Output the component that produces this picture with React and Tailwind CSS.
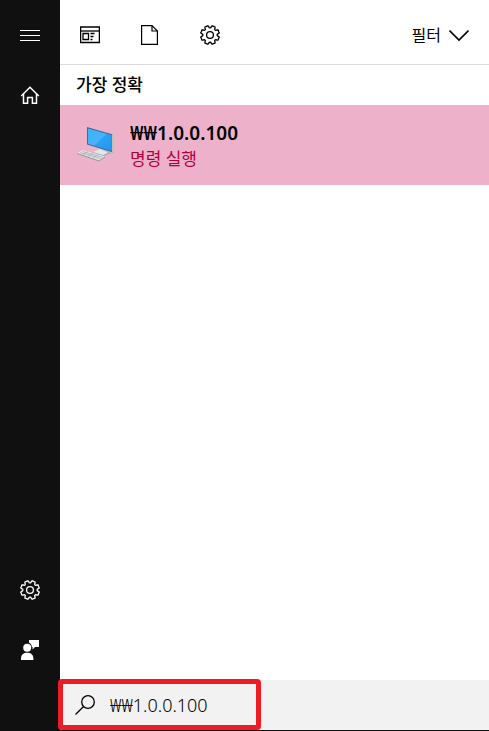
import React from 'react';

// One gear tooth: angle from the tooth's centre, distance from the hub
const TOOTH = [[-22.5, 7.1], [-16, 7.4], [-13.5, 8.6], [-9, 9.6], [-4, 9.3], [4, 9.3], [9, 9.6], [13.5, 8.6], [16, 7.4]];

function gearPath() {
    const points = [];
    for (let tooth = 0; tooth < 8; tooth++) {
        TOOTH.forEach(([offset, radius]) => {
            const angle = ((22.5 + tooth * 45 + offset) * Math.PI) / 180;
            points.push(`${(10 + radius * Math.sin(angle)).toFixed(2)} ${(10 - radius * Math.cos(angle)).toFixed(2)}`);
        });
    }
    return `M${points.join('L')}Z`;
}

const GEAR = gearPath();

function GearIcon() {
    return (
        <svg viewBox="0 0 20 20" className="w-5 h-5" fill="none" stroke="currentColor" strokeWidth="1.3" strokeLinejoin="round">
            <path d={GEAR} />
            <circle cx="10" cy="10" r="3.4" />
        </svg>
    );
}

function MenuIcon() {
    return (
        <svg viewBox="0 0 20 20" className="w-5 h-5" stroke="currentColor" strokeWidth="1">
            <path d="M0 5.5H20M0 10.5H20M0 15.5H20" />
        </svg>
    );
}

function HomeIcon() {
    return (
        <svg viewBox="0 0 20 20" className="w-5 h-5" fill="none" stroke="currentColor" strokeWidth="1.5">
            <path d="M1.2 11L10 2.2L18.8 11" />
            <path d="M3.5 9V18.3H7.6V12.5H12.4V18.3H16.5V9" />
        </svg>
    );
}

function FeedbackIcon() {
    return (
        <svg viewBox="0 0 20 20" className="w-5 h-5" fill="currentColor">
            <path d="M9 0H19V7H15L12.6 9.6V7H11.8C11.8 4.8 10.6 3.3 9 2.7Z" />
            <circle cx="7.2" cy="7.7" r="4" />
            <path d="M1 20V18.5C1 14.8 3.6 12.8 7.2 12.8S13.4 14.8 13.4 18.5V20Z" />
        </svg>
    );
}

function AppsIcon() {
    return (
        <svg viewBox="0 0 20 20" className="w-5 h-5" fill="none" stroke="currentColor">
            <path d="M0.6 2H19.4V17.5H0.6Z" strokeWidth="1.3" />
            <path d="M0 6H20" strokeWidth="1.3" />
            <path d="M3 8.5H8.5V14.5H3Z" strokeWidth="1.3" />
            <path d="M10.5 8.5H14.5M10.5 11.5H13.5M10.5 14.5H12.5" strokeWidth="1.3" />
        </svg>
    );
}

function DocumentIcon() {
    return (
        <svg viewBox="0 0 20 20" className="w-5 h-5" fill="none" stroke="currentColor" strokeWidth="1.2">
            <path d="M1.6 0.6H12L17.4 6V19.4H1.6Z" />
            <path d="M12 0.6V6H17.4" />
        </svg>
    );
}

function ChevronIcon() {
    return (
        <svg viewBox="0 0 20 20" className="w-5 h-5" fill="none" stroke="currentColor" strokeWidth="1.6">
            <path d="M0.5 5.5L10 15L19.5 5.5" />
        </svg>
    );
}

function SearchIcon() {
    return (
        <svg viewBox="0 0 20 20" className="w-5 h-5 shrink-0" fill="none" stroke="currentColor" strokeWidth="1.3">
            <circle cx="13" cy="7" r="6.3" />
            <path d="M8.6 11.5L0.5 19.5" />
        </svg>
    );
}

function ComputerIcon() {
    return (
        <svg viewBox="0 0 40 40" className="w-10 h-10 shrink-0">
            <defs>
                <linearGradient id="screen" x1="0" y1="0" x2="1" y2="1">
                    <stop offset="0" stopColor="#35b4fb" />
                    <stop offset="0.5" stopColor="#4ab2fc" />
                    <stop offset="0.52" stopColor="#2ba2f8" />
                    <stop offset="1" stopColor="#2195f0" />
                </linearGradient>
            </defs>
            <path d="M17 27L24 24L33 27L36 28L27 31.5L17 28.5Z" fill="#a9b0b5" />
            <path d="M17 27L24 24L32 27.5L27 30Z" fill="#e4e8ea" />
            <path d="M11 2L37 9.5V27.5L11 19.5Z" fill="#3c6f96" />
            <path d="M36 9.2L37.5 9.7V28L36 27.5Z" fill="#c5c0ad" />
            <path d="M12 3.4L35.8 10.2V26L12 18.7Z" fill="url(#screen)" />
            <path d="M1 28L7 25L29 31.5L23 35.5Z" fill="#dfe3e5" />
            <path d="M1 28L23 35.5L29 31.5V32.5L23 36.5L1 29Z" fill="#939a9f" />
            <path d="M4 27.5L24.5 33.5M6.5 26.5L26.5 32.3M7 30L12 26.5M12 31.5L17 28M17 33L22 29.5" stroke="#a4abb0" strokeWidth="0.7" />
        </svg>
    );
}

function SideButton({ label, children }) {
    return (
        <button type="button" aria-label={label} className="w-full h-15 flex items-center justify-center">
            {children}
        </button>
    );
}

function FilterButton({ label, children }) {
    return (
        <button type="button" aria-label={label} className="w-15 h-full flex items-center justify-center">
            {children}
        </button>
    );
}

export default function App() {
    return (
        <div className="min-h-screen flex bg-white text-black font-['Noto_Sans','Noto_Sans_CJK_KR',sans-serif]">
            <nav className="w-15 shrink-0 flex flex-col justify-between bg-[#101010] text-white pt-[5px] pb-[51px]">
                <div>
                    <SideButton label="메뉴"><MenuIcon /></SideButton>
                    <SideButton label="홈"><HomeIcon /></SideButton>
                </div>
                <div>
                    <SideButton label="설정"><GearIcon /></SideButton>
                    <SideButton label="피드백"><FeedbackIcon /></SideButton>
                </div>
            </nav>

            <main className="flex-1 min-w-0 flex flex-col">
                <header className="h-[65px] pt-1.5 pr-5 flex items-center border-b border-[#dcdcdc]">
                    <FilterButton label="앱"><AppsIcon /></FilterButton>
                    <FilterButton label="문서"><DocumentIcon /></FilterButton>
                    <FilterButton label="설정"><GearIcon /></FilterButton>
                    <button type="button" className="ml-auto flex items-center gap-2 text-base">
                        필터
                        <ChevronIcon />
                    </button>
                </header>

                <section className="flex-1">
                    <h2 className="h-10 px-4 flex items-center text-[17px] font-medium">가장 정확</h2>
                    {/* 가장 정확한 결과 */}
                    <button type="button" className="w-full h-20 pl-4 flex items-center gap-3.5 bg-[#edb2ca] text-left">
                        <ComputerIcon />
                        <span className="flex flex-col">
                            <span className="text-[19px] leading-7 font-semibold">₩₩1.0.0.100</span>
                            <span className="text-[17px] leading-6 text-[#b00040]">명령 실행</span>
                        </span>
                    </button>
                </section>

                <div className="relative border-b border-[#101010]">
                    <label className="h-[50px] px-[15px] flex items-center gap-[15px] bg-[#f2f2f2]">
                        <SearchIcon />
                        <input
                            type="text"
                            aria-label="검색"
                            defaultValue="₩₩1.0.0.100"
                            className="flex-1 min-w-0 bg-transparent outline-none text-lg font-light"
                        />
                    </label>
                    <div className="absolute -top-px -left-0.5 w-[203px] h-[51px] rounded-sm border-5 border-[#ee1c25] pointer-events-none"></div>
                </div>
            </main>
        </div>
    );
}
